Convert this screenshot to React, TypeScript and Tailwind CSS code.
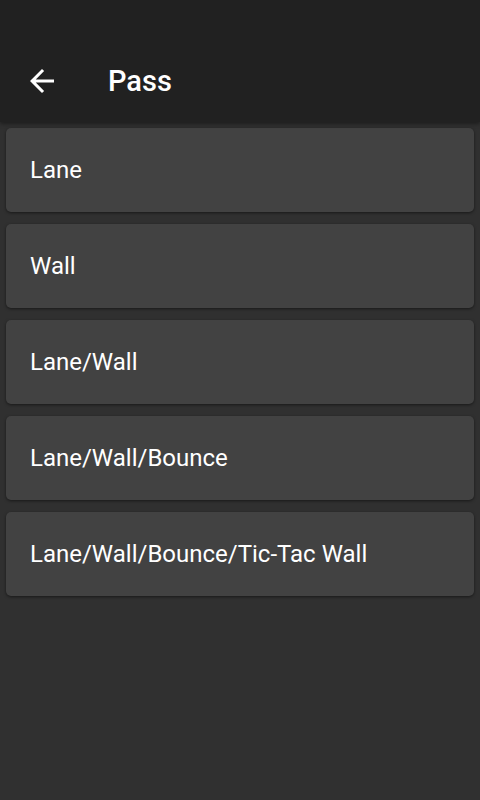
import React from "react";

const items = ["Lane", "Wall", "Lane/Wall", "Lane/Wall/Bounce", "Lane/Wall/Bounce/Tic-Tac Wall"];

export default function App() {
  return (
    <div
      className="w-[480px] h-[800px] bg-[#303030] flex flex-col overflow-hidden"
      style={{ fontFamily: "Roboto, 'Liberation Sans', sans-serif" }}
    >
      <div className="h-[122px] bg-[#212121] pt-[40px] shadow-[0_2px_4px_rgba(0,0,0,0.4)] relative z-10 shrink-0">
        <div className="h-[82px] flex items-center">
          <div className="w-[36px] h-[36px] ml-[24px] flex items-center justify-center">
            <svg width="36" height="36" viewBox="0 0 24 24" fill="#ffffff">
              <path d="M20 11H7.83l5.59-5.59L12 4l-8 8 8 8 1.41-1.41L7.83 13H20v-2z" />
            </svg>
          </div>
          <div className="ml-[48px] text-white text-[29px] font-medium leading-none">Pass</div>
        </div>
      </div>
      <div className="flex flex-col gap-[12px] px-[6px] pt-[6px]">
        {items.map((t) => (
          <div
            key={t}
            className="h-[84px] bg-[#424242] rounded-[5px] shadow-[0_1px_3px_rgba(0,0,0,0.5)] flex items-center pl-[24px] text-white text-[24px] leading-none"
          >
            {t}
          </div>
        ))}
      </div>
    </div>
  );
}
